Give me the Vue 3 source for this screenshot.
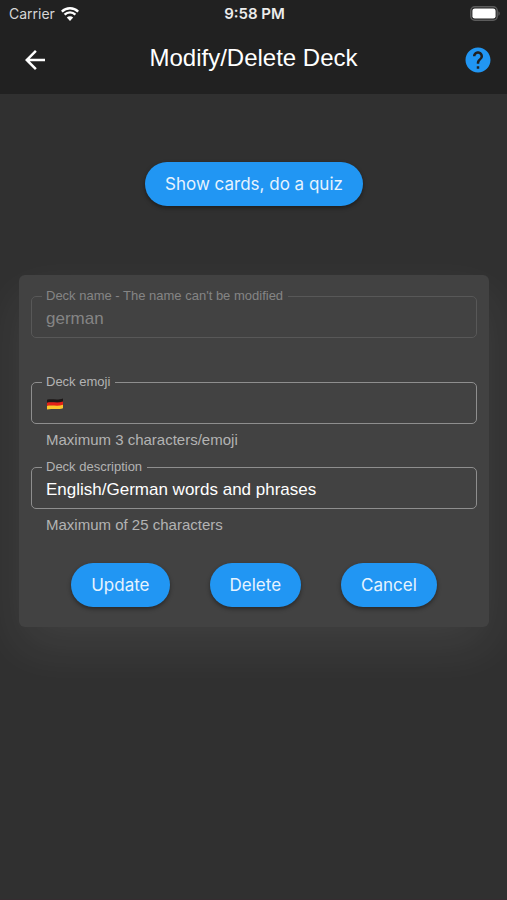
<script setup>
import { ref } from 'vue'

const name = ref('german')
const emoji = ref('')
const description = ref('English/German words and phrases')
const actions = ['Update', 'Delete', 'Cancel']
</script>

<template>
  <div class="screen">
    <header class="top">
      <div class="status">
        <div class="carrier">
          <span>Carrier</span>
          <svg width="18" height="14" viewBox="0 0 18 14" aria-hidden="true">
            <path d="M0.8 4.6a11.7 11.7 0 0 1 16.4 0" />
            <path d="M3.6 7.6a7.7 7.7 0 0 1 10.8 0" />
            <path class="dot" d="M9 14 5.8 10.6a4.5 4.5 0 0 1 6.4 0z" />
          </svg>
        </div>
        <span class="clock">9:58 PM</span>
        <svg class="battery" width="30" height="15" viewBox="0 0 30 15" aria-hidden="true">
          <rect x="0.8" y="0.8" width="26.4" height="13.4" rx="4" fill="none" stroke="#5c5c5c" stroke-width="1.5" />
          <rect x="2.4" y="2.4" width="23.2" height="10.2" rx="2.4" fill="#fff" />
          <path d="M28.4 5.2c1.8.8 1.8 3.8 0 4.6z" fill="#5c5c5c" />
        </svg>
      </div>
      <div class="bar">
        <button class="icon" type="button" aria-label="Back">
          <svg width="30" height="30" viewBox="0 0 24 24">
            <path fill="#fff" d="M20 11H7.83l5.59-5.59L12 4l-8 8 8 8 1.41-1.41L7.83 13H20v-2z" />
          </svg>
        </button>
        <h1>Modify/Delete Deck</h1>
        <button class="icon help" type="button" aria-label="Help">
          <svg width="30" height="30" viewBox="0 0 24 24">
            <path fill="#2196f3" d="M12 2C6.48 2 2 6.48 2 12s4.48 10 10 10 10-4.48 10-10S17.52 2 12 2zm1 17h-2v-2h2v2zm2.07-7.75l-.9.92C13.45 12.9 13 13.5 13 15h-2v-.5c0-1.1.45-2.1 1.17-2.83l1.24-1.26c.37-.36.59-.86.59-1.41 0-1.1-.9-2-2-2s-2 .9-2 2H8c0-2.21 1.79-4 4-4s4 1.79 4 4c0 .88-.36 1.68-.93 2.25z" />
          </svg>
        </button>
      </div>
    </header>

    <main>
      <button class="pill" type="button">Show cards, do a quiz</button>

      <form class="card" @submit.prevent>
        <fieldset class="field locked">
          <legend><label for="deck-name">Deck name - The name can't be modified</label></legend>
          <input id="deck-name" v-model="name" type="text" disabled />
        </fieldset>

        <fieldset class="field">
          <legend><label for="deck-emoji">Deck emoji</label></legend>
          <svg class="flag" width="18" height="12" viewBox="0 0 18 12" aria-hidden="true">
            <path fill="#1c1717" d="M1 1.8C5 .2 11 2.600 17 .4V4C11 6 5 3.600 1 5.200z" />
            <path fill="#e32018" d="M1 4.800C5 3.200 11 5.600 17 3.600V7.400C11 9.200 5 6.800 1 8.400z" />
            <path fill="#fcc62c" d="M1 8C5 6.400 11 8.800 17 6.800V10.200C11 12.200 5 10 1 11.600z" />
          </svg>
          <input id="deck-emoji" v-model="emoji" type="text" aria-describedby="emoji-hint" />
        </fieldset>
        <p id="emoji-hint" class="hint">Maximum 3 characters/emoji</p>

        <fieldset class="field">
          <legend><label for="deck-description">Deck description</label></legend>
          <input id="deck-description" v-model="description" type="text" aria-describedby="description-hint" />
        </fieldset>
        <p id="description-hint" class="hint">Maximum of 25 characters</p>

        <div class="actions">
          <button v-for="action in actions" :key="action" class="pill" type="button">{{ action }}</button>
        </div>
      </form>
    </main>
  </div>
</template>

<style>
body {
  margin: 0;
  background: #303030;
}
</style>

<style scoped>
.screen {
  min-height: 100vh;
  box-sizing: border-box;
  background: #303030;
  border-bottom: 1px solid #352c30;
  color: #fff;
  font-family: "Liberation Sans", Arial, sans-serif;
}

.top {
  background: #212121;
  padding-bottom: 16px;
}

.status {
  display: grid;
  grid-template-columns: 1fr auto 1fr;
  align-items: center;
  height: 27px;
  padding: 0 7px 0 9px;
  font: 14px/20px Inter, sans-serif;
}

.carrier {
  display: flex;
  align-items: center;
  gap: 6px;
  color: #d6d6d6;
}

.carrier svg {
  fill: none;
  stroke: #fff;
  stroke-width: 2.4;
}

.carrier .dot {
  fill: #fff;
  stroke: none;
}

.clock {
  font-size: 15px;
  font-weight: 600;
  color: #ececec;
}

.battery {
  justify-self: end;
}

.bar {
  display: grid;
  grid-template-columns: 1fr auto 1fr;
  align-items: center;
  height: 51px;
  padding: 0 14px 0 20px;
}

.icon {
  display: flex;
  justify-self: start;
  margin-top: 14px;
  padding: 0;
  border: 0;
  background: none;
}

.help {
  justify-self: end;
}

h1 {
  margin: 10px 6px 0 0;
  font-size: 24px;
  line-height: 28px;
  font-weight: 400;
}

main {
  display: flex;
  flex-direction: column;
  align-items: center;
  gap: 69px;
  padding: 68px 18px 0 19px;
}

.pill {
  height: 44px;
  padding: 0 20px;
  border: 0;
  border-radius: 22px;
  background: #2196f3;
  color: #e6f3fe;
  font: 17px/20px Inter, sans-serif;
  box-shadow: 0 2px 4px rgba(0, 0, 0, 0.4);
}

.card {
  align-self: stretch;
  padding: 14px 12px 20px;
  border-radius: 6px;
  background: #424242;
  box-shadow: 0 20px 50px rgba(255, 255, 255, 0.08);
}

.field {
  display: flex;
  align-items: center;
  min-width: 0;
  margin: 0;
  padding: 0 14px 0 10px;
  border: 1px solid #8e8e8e;
  border-radius: 5px;
}

.field legend {
  padding: 0 5px 0 4px;
  color: #b3b3b3;
  font-size: 13px;
  line-height: 14px;
}

.field input {
  flex: 1;
  min-width: 0;
  height: 32px;
  padding: 0 0 2px 4px;
  border: 0;
  outline: 0;
  background: none;
  color: #fff;
  font: 17px/20px "Liberation Sans", Arial, sans-serif;
}

.locked {
  margin-bottom: 37px;
  border-color: #585858;
}

.locked legend,
.locked input {
  color: #858585;
}

.flag {
  margin: 0 0 4px 4px;
}

.hint {
  margin: 8px 15px 12px;
  color: #b3b3b3;
  font-size: 15px;
  line-height: 16px;
}

.actions {
  display: flex;
  justify-content: center;
  flex-wrap: wrap;
  gap: 20px 40px;
  margin-top: 30px;
}
</style>
